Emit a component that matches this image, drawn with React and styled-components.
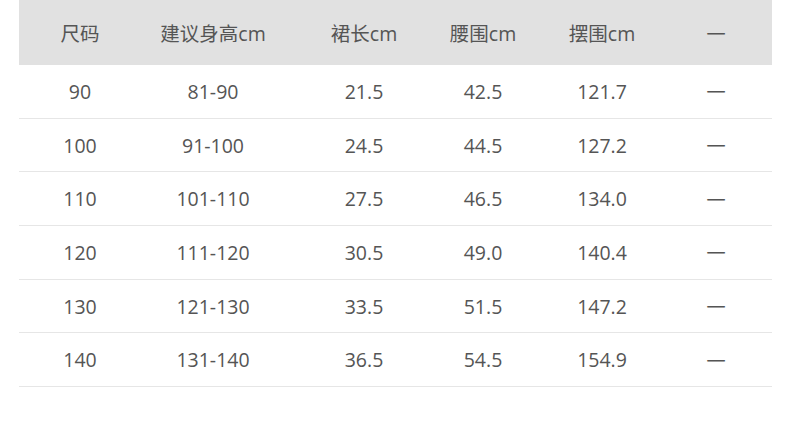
import styled, { createGlobalStyle } from 'styled-components';

const GlobalStyle = createGlobalStyle`
  body {
    margin: 0;
    background: #ffffff;
    font-family: "Open Sans", "Noto Sans CJK SC", sans-serif;
  }
`;

const Page = styled.div`
  width: 790px;
  height: 431px;
  padding: 0 18px 0 19px;
  box-sizing: border-box;
`;

const Row = styled.div`
  display: grid;
  grid-template-columns: 122px 144px 158px 80px 158px 91px;
  align-items: center;
  box-sizing: border-box;
  height: ${p => (p.$head ? '65px' : '53.7px')};
  background: ${p => (p.$head ? '#e1e1e1' : 'transparent')};
  border-bottom: ${p => (p.$head ? 'none' : '1px solid #e6e6e6')};
  color: #555555;
  font-size: 19.5px;
`;

const Cell = styled.div`
  text-align: center;
  white-space: nowrap;
`;

const Dash = styled(Cell)`
  padding-right: 21px;
  font-family: "Noto Sans CJK SC", sans-serif;
  font-size: 22px;
  transform: translateY(-3px);
`;

const head = ['尺码', '建议身高cm', '裙长cm', '腰围cm', '摆围cm'];

const rows = [
  ['90', '81-90', '21.5', '42.5', '121.7'],
  ['100', '91-100', '24.5', '44.5', '127.2'],
  ['110', '101-110', '27.5', '46.5', '134.0'],
  ['120', '111-120', '30.5', '49.0', '140.4'],
  ['130', '121-130', '33.5', '51.5', '147.2'],
  ['140', '131-140', '36.5', '54.5', '154.9'],
];

const App = () => {
  return (
    <Page>
      <GlobalStyle />
      <Row $head>
        {head.map((h, i) => <Cell key={i}>{h}</Cell>)}
        <Dash>—</Dash>
      </Row>
      {rows.map((r, i) => (
        <Row key={i}>
          {r.map((c, j) => <Cell key={j}>{c}</Cell>)}
          <Dash>—</Dash>
        </Row>
      ))}
    </Page>
  );
};

export default App;
